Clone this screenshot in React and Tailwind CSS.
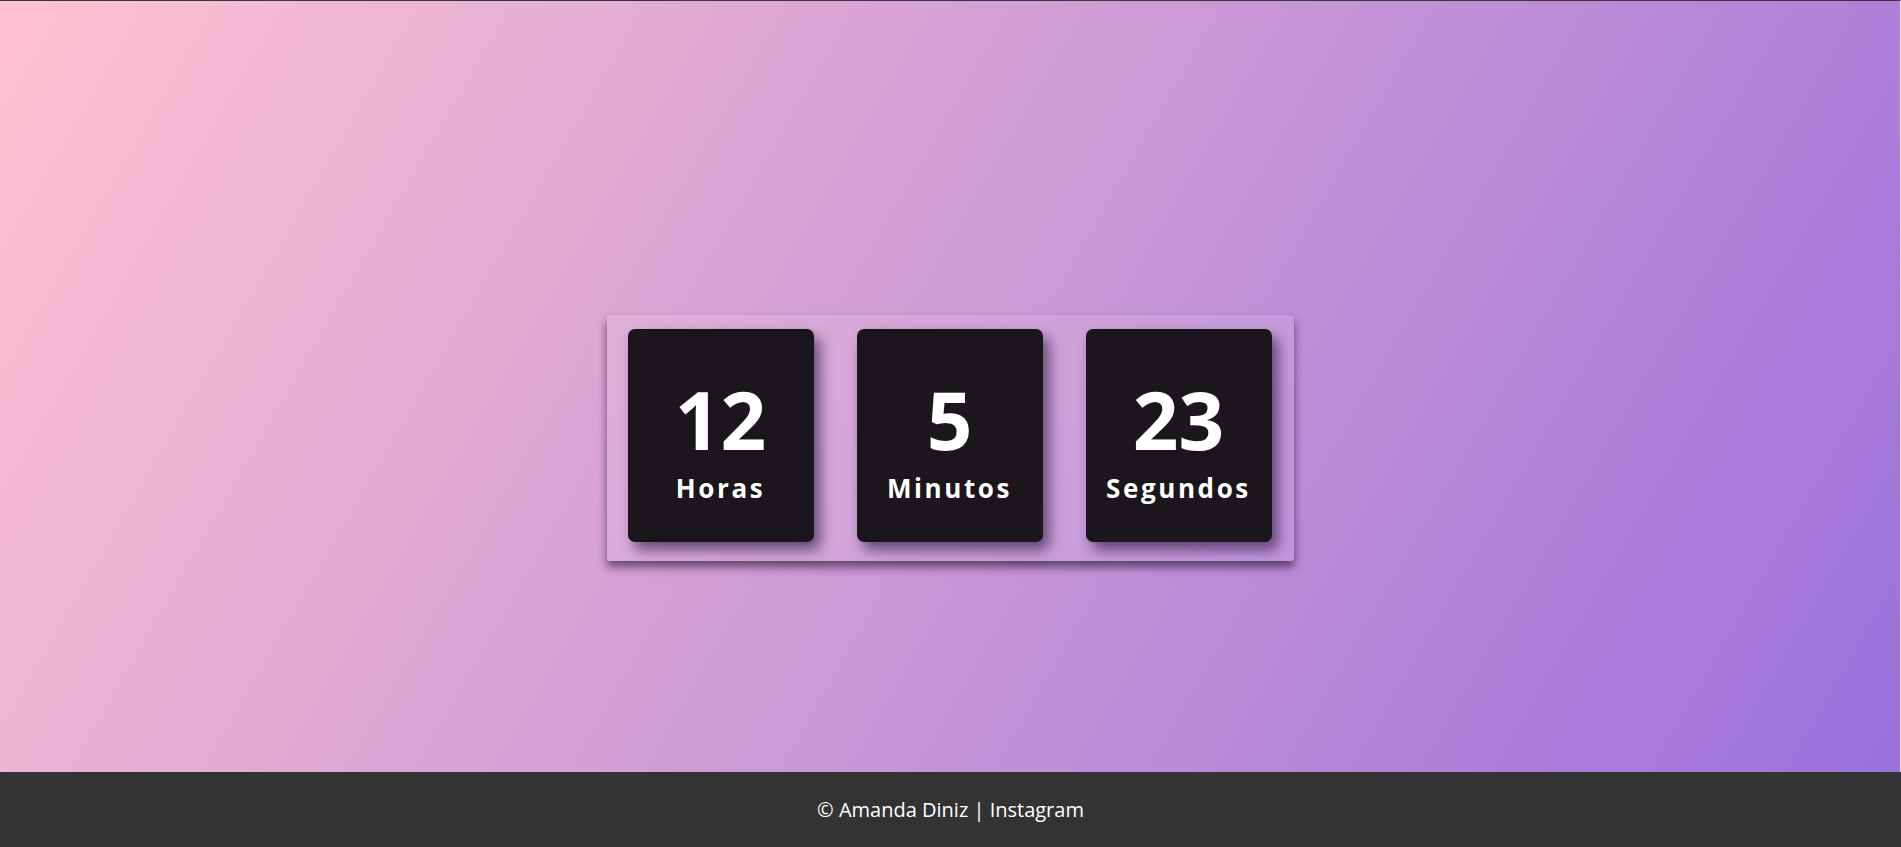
import React from "react";

const items = [
  { value: "12", label: "Horas" },
  { value: "5", label: "Minutos" },
  { value: "23", label: "Segundos" },
];

export default function App() {
  return (
    <div
      className="flex flex-col w-full h-[847px] overflow-hidden"
      style={{ fontFamily: '"Open Sans", "Noto Sans", sans-serif' }}
    >
      <main className="h-[772px] flex justify-center items-start pt-[314px] border-t border-[#3b3540] border-r border-r-[#ece4f6] bg-[linear-gradient(120deg,#ffc3d0,#9a71db)]">
        <div className="flex gap-[43px] pl-[21px] pr-[22px] pt-[14px] pb-[19px] rounded-[3px] bg-white/10 shadow-[0_6px_10px_rgba(30,10,40,0.6)]">
          {items.map((it) => (
            <div
              key={it.label}
              className="w-[186px] h-[213px] rounded-[7px] bg-[#1a161b] flex flex-col items-center pt-[50px] shadow-[6px_8px_14px_rgba(30,10,50,0.6)]"
            >
              <div className="text-white font-bold text-[80px] leading-[80px]">
                {it.value}
              </div>
              <div className="text-white font-bold text-[26px] leading-[33px] mt-[13px] tracking-[0.1em]">
                {it.label}
              </div>
            </div>
          ))}
        </div>
      </main>
      <footer className="h-[75px] bg-[#333333] flex items-center justify-center">
        <p className="text-white text-[20px]">© Amanda Diniz | Instagram</p>
      </footer>
    </div>
  );
}
